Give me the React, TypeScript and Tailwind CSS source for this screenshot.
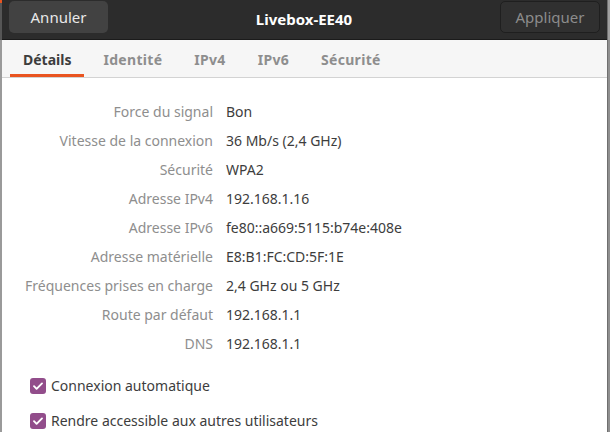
// Wi-Fi connection details dialog: header bar with cancel / apply, a tab strip,
// the key/value details grid and the two connection checkboxes.

const TABS = ["Détails", "Identité", "IPv4", "IPv6", "Sécurité"];

const DETAILS: ReadonlyArray<{ label: string; value: string }> = [
  { label: "Force du signal", value: "Bon" },
  { label: "Vitesse de la connexion", value: "36 Mb/s (2,4 GHz)" },
  { label: "Sécurité", value: "WPA2" },
  { label: "Adresse IPv4", value: "192.168.1.16" },
  { label: "Adresse IPv6", value: "fe80::a669:5115:b74e:408e" },
  { label: "Adresse matérielle", value: "E8:B1:FC:CD:5F:1E" },
  { label: "Fréquences prises en charge", value: "2,4 GHz ou 5 GHz" },
  { label: "Route par défaut", value: "192.168.1.1" },
  { label: "DNS", value: "192.168.1.1" },
];

const OPTIONS = ["Connexion automatique", "Rendre accessible aux autres utilisateurs"];

function CheckBox() {
  return (
    <span className="flex h-4 w-4 items-center justify-center rounded-[3px] bg-[#924d8b]">
      <svg viewBox="0 0 16 16" className="h-4 w-4" fill="none">
        <path d="M4 8.2l2.6 2.6L12 5.4" stroke="#ffffff" strokeWidth="1.9" strokeLinecap="round" strokeLinejoin="round" />
      </svg>
    </span>
  );
}

export default function App() {
  return (
    <div
      className="flex h-[432px] w-[610px] overflow-hidden bg-white text-[14px]"
      style={{ fontFamily: '"Noto Sans", "Open Sans", sans-serif' }}
    >
      <div className="flex w-[2px] flex-col">
        <div className="h-[3px] bg-[#e95420]" />
        <div className="h-[37px] bg-[#565656]" />
        <div className="flex-1 bg-[#9a9a9a]" />
      </div>

      <div className="flex flex-1 flex-col">
        <header className="flex h-[40px] items-start justify-between border-b border-[#1b1b1b] bg-[#2c2c2c] px-[7px] pt-px">
          <button className="h-[32px] w-[99px] rounded-[5px] bg-[#424242] text-[15px] text-[#e8e8e8]">
            Annuler
          </button>
          <h1 className="pt-[7px] text-[15px] font-bold text-white">Livebox-EE40</h1>
          <button className="h-[32px] w-[100px] rounded-[5px] border border-[#1f1f1f] bg-[#303030] text-[15px] text-[#8c8c8c]">
            Appliquer
          </button>
        </header>

        <nav className="flex h-[38px] gap-[6px] border-b border-[#d3d3d3] bg-[#f6f6f6] pl-[8px]">
          {TABS.map((tab, i) => (
            <div
              key={tab}
              className={
                i === 0
                  ? "flex items-center border-b-[3px] border-[#e95420] px-[13px] pt-[4px] font-bold text-[#3d3d3d]"
                  : "flex items-center border-b-[3px] border-transparent px-[13px] pt-[4px] font-bold tracking-[0.3px] text-[#8e8e8e]"
              }
            >
              {tab}
            </div>
          ))}
        </nav>

        <section className="grid grid-cols-[211px_1fr] gap-x-[13px] gap-y-[8px] pt-[23px]">
          {DETAILS.map((row) => (
            <div key={row.label} className="contents">
              <span className="h-[21px] text-right leading-[21px] text-[#8e8e8e]">{row.label}</span>
              <span className="h-[21px] leading-[21px] text-[#3d3d3d]">{row.value}</span>
            </div>
          ))}
        </section>

        <section className="flex flex-col gap-[14px] pl-[28px] pt-[21px]">
          {OPTIONS.map((label) => (
            <label key={label} className="flex h-[21px] items-center gap-[5px] text-[#3d3d3d]">
              <CheckBox />
              <span>{label}</span>
            </label>
          ))}
        </section>
      </div>

      <div className="flex w-[3px] flex-col border-l border-[#6f6f6f]">
        <div className="h-[40px] bg-[#a0a0a0]" />
        <div className="flex-1 bg-[#8f8f8f]" />
      </div>
    </div>
  );
}
